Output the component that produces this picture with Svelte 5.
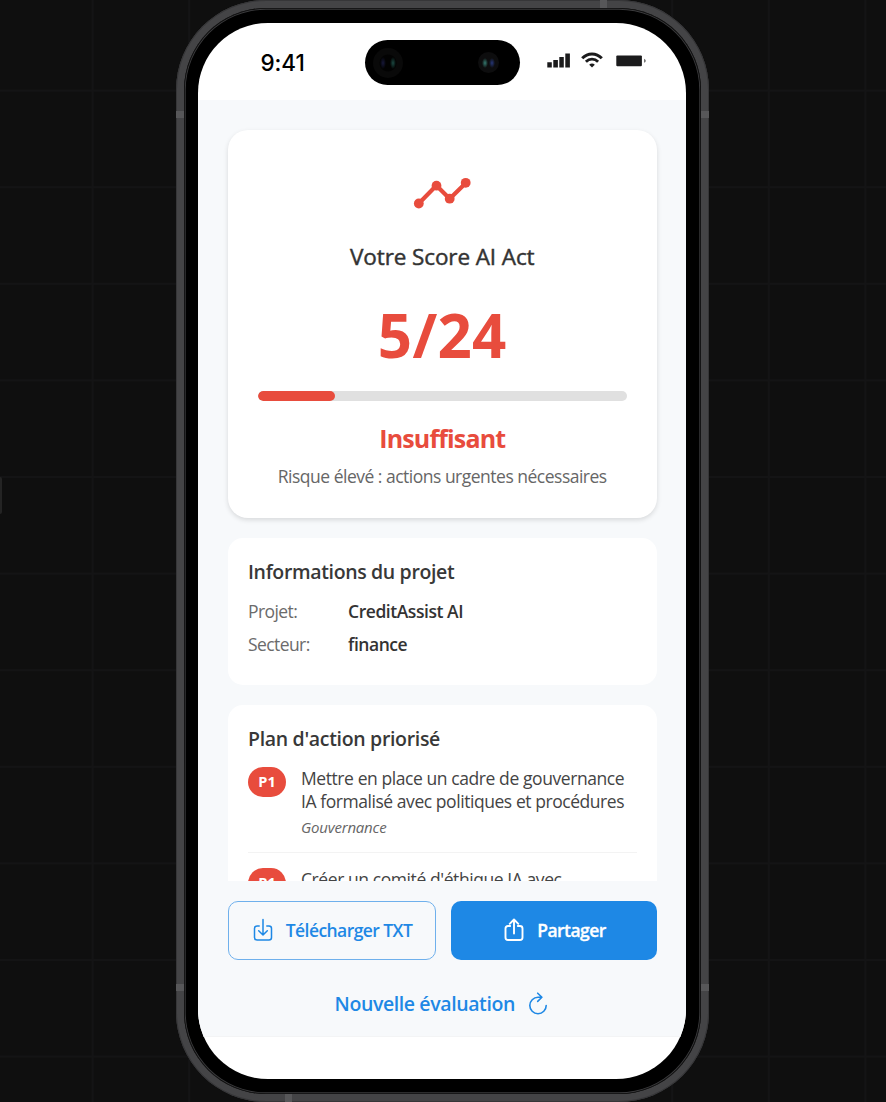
<script>
  const score = 5;
  const total = 24;
  const project = [
    { label: 'Projet:', value: 'CreditAssist AI' },
    { label: 'Secteur:', value: 'finance' }
  ];
</script>

<div class="stage">
  <div class="side-tab"></div>
  <div class="phone">
    <i class="band" style="left:0;top:111px"></i>
    <i class="band" style="right:0;top:111px"></i>
    <i class="band" style="left:0;top:984px"></i>
    <i class="band" style="right:0;top:984px"></i>
    <i class="band v" style="left:424px;top:0"></i>
    <i class="band v" style="left:109px;bottom:0"></i>
    <div class="bezel">
      <div class="screen">
        <header class="status">
          <span class="time">9:41</span>
          <div class="island"><i class="lens a"></i><i class="lens b"></i></div>
          <svg class="signal" width="24" height="16" viewBox="0 0 24 16" fill="#1b1b1c">
            <path d="M.3 9.3h4.5v5.3H.3zM6.3 7h4.6v7.6H6.3zM12.3 4h4.5v10.6h-4.5zM18.3.5h4.6v14.1h-4.6z" />
          </svg>
          <svg class="wifi" width="22" height="16" viewBox="0 0 22 16" fill="none" stroke="#1b1b1c">
            <path d="M1.2 6.200C6.800.500 15.200.500 20.800 6.200" stroke-width="3" />
            <path d="M4.900 9.700c3.500-3.400 8.700-3.400 12.200 0" stroke-width="2.900" />
            <path d="M8.200 12.700c1.500-1.700 4.100-1.700 5.600 0L11 15.400z" fill="#1b1b1c" stroke="none" />
          </svg>
          <svg class="battery" width="31" height="12" viewBox="0 0 31 12" fill="#1b1b1c">
            <rect x=".3" y=".4" width="25.6" height="10.8" rx="1" />
            <path d="M28.2 3.8c2 .9 2 3.2 0 4z" fill="#555" />
          </svg>
        </header>

        <main class="content">
          <section class="card score-card">
            <svg class="trend" width="60" height="36" viewBox="0 0 60 36" fill="#e84c3d">
              <path d="M6.8 26.5 24.4 8.5 37.7 21.7 53.8 6" fill="none" stroke="#e84c3d" stroke-width="4.2" />
              <circle cx="6.8" cy="26.5" r="4.9" /><circle cx="24.5" cy="8.7" r="4.9" />
              <circle cx="37.7" cy="21.7" r="4.9" /><circle cx="53.7" cy="5.8" r="4.9" />
            </svg>
            <h1>Votre Score AI Act</h1>
            <div class="score">{score}/{total}</div>
            <div class="track"><div class="fill" style="width:{(score / total) * 100}%"></div></div>
            <div class="verdict">Insuffisant</div>
            <p class="risk">Risque élevé : actions urgentes nécessaires</p>
          </section>

          <section class="card info">
            <h2>Informations du projet</h2>
            {#each project as row}
              <div class="row"><span class="label">{row.label}</span><span class="value">{row.value}</span></div>
            {/each}
          </section>

          <section class="card plan">
            <h2>Plan d'action priorisé</h2>
            <div class="action">
              <span class="badge">P1</span>
              <div class="body">
                <div class="line first">Mettre en place un cadre de gouvernance</div>
                <div class="line">IA formalisé avec politiques et procédures</div>
                <div class="cat">Gouvernance</div>
              </div>
            </div>
            <div class="action">
              <span class="badge">P1</span>
              <div class="body"><div class="line first">Créer un comité d'éthique IA avec</div></div>
            </div>
          </section>
        </main>

        <footer class="footer">
          <div class="buttons">
            <button class="btn outline">
              <svg width="20" height="24" viewBox="0 0 20 24" fill="none" stroke="currentColor" stroke-width="1.5" stroke-linecap="round" stroke-linejoin="round">
                <path d="M6.2 8H4Q1.5 8 1.5 10.5v9Q1.5 22 4 22h12q2.500 0 2.500-2.500v-9Q18.500 8 16 8h-2.200M10 1.500v15.300M5.700 12.800 10 17l4.300-4.200" />
              </svg>
              <span>Télécharger TXT</span>
            </button>
            <button class="btn solid">
              <svg width="20" height="24" viewBox="0 0 20 24" fill="none" stroke="currentColor" stroke-width="1.9" stroke-linecap="round" stroke-linejoin="round">
                <path d="M6.200 8H4Q1.500 8 1.500 10.500v9Q1.500 22 4 22h12q2.500 0 2.500-2.500v-9Q18.500 8 16 8h-2.200M10 15.500V1.700M5.700 5.800 10 1.500l4.300 4.300" />
              </svg>
              <span>Partager</span>
            </button>
          </div>
          <button class="again">
            <span>Nouvelle évaluation</span>
            <svg width="20" height="24" viewBox="0 0 20 24" fill="none" stroke="currentColor" stroke-width="1.600" stroke-linecap="round" stroke-linejoin="round">
              <path d="M13.700 5.300H10A8.200 8.200 0 1 0 18.200 13.500M9.700 1.200 13.900 5.300 9.700 9.400" />
            </svg>
          </button>
        </footer>
      </div>
    </div>
  </div>
</div>

<style>
  :global(body) { margin: 0; background: #0f0f0f; overflow: hidden; }
  * { box-sizing: border-box; }
  .stage {
    position: relative; width: 886px; height: 1102px; overflow: hidden;
    display: flex; padding-left: 175.500px;
    font-family: "Open Sans", "Noto Sans", sans-serif; color: #333;
    background:
      repeating-linear-gradient(90deg, transparent 0 92px, #141415 92px 94px, transparent 94px 96.6px) 0 0 / 96.600px 100%,
      repeating-linear-gradient(180deg, transparent 0 90px, #141415 90px 91.500px, transparent 91.500px 96.600px) 0 0 / 100% 96.600px,
      #0f0f0f;
  }
  .side-tab { position: absolute; left: 0; top: 477px; width: 2px; height: 37px; background: #242424; border-radius: 0 2px 2px 0; }
  .phone {
    position: relative; width: 533.500px; height: 1102px; padding: 8px; flex: none;
    border-radius: 90px; background: #444446; box-shadow: inset 0 0 0 1px #363638;
  }
  .band { position: absolute; width: 8px; height: 7px; background: #575759; }
  .band.v { width: 7px; height: 8px; }
  .bezel {
    height: 1086px; padding: 15px 15px 15px 14.500px; border-radius: 82px; background: #000;
    box-shadow: inset 0 0 0 .8px #0c0c0c, inset 0 0 0 1.700px #3b3b3d;
  }
  .screen {
    width: 488px; height: 1056px; border-radius: 70px; overflow: hidden; background: #fff;
    display: flex; flex-direction: column;
  }
  .status { height: 77px; flex: none; display: flex; padding-left: 62.500px; align-items: flex-start; }
  .time { width: 104.500px; margin-top: 25px; font: 500 22.500px/30px Inter, sans-serif; letter-spacing: -.1px; color: #000; }
  .island { position: relative; width: 154.500px; height: 45px; margin-top: 16.500px; border-radius: 23px; background: #000; }
  .lens { position: absolute; border-radius: 50%; }
  .lens.a { left: 8px; top: 8px; width: 30px; height: 30px; background: radial-gradient(ellipse 3px 6px at 10px 15px, #17183a, transparent), radial-gradient(ellipse 3px 6px at 20px 15px, #1c4a43, transparent), radial-gradient(circle, #020202 0 8px, #090909 9px); }
  .lens.b { left: 113px; top: 12px; width: 21px; height: 21px; background: radial-gradient(ellipse 3px 5px at 7px 11px, #357a70, transparent), radial-gradient(ellipse 3px 5px at 14px 11px, #263779, transparent), #0d0d0e; }
  .signal { margin: 30px 0 0 27.500px; }
  .wifi { margin: 29px 0 0 10px; }
  .battery { margin: 32px 0 0 13px; }

  .content { height: 781px; flex: none; overflow: hidden; padding: 30px 29.500px 0 30px; background: #f7f9fb; }
  .card { background: #fff; border-radius: 15px; margin-bottom: 20px; padding: 20px; }
  .score-card { height: 388px; border-radius: 20px; padding: 43px 30px 0; text-align: center; box-shadow: 0 2px 5px rgba(0,0,0,.13); }
  h1, h2, p { margin: 0; }
  .trend { display: block; margin: 4px auto 0; }
  h1 { font-size: 22.500px; line-height: 30px; font-weight: 500; margin-top: 29px; white-space: nowrap; letter-spacing: -.1px; -webkit-text-stroke: .45px #333; }
  .score { font-size: 60px; line-height: 80px; font-weight: 700; color: #e84c3d; margin-top: 23px; letter-spacing: .3px; }
  .track { height: 10px; margin-top: 16px; border-radius: 5px; background: #e0e0e0; overflow: hidden; }
  .fill { height: 10px; border-radius: 5px; background: #e84c3d; }
  .verdict { margin-top: 21px; font-size: 25px; line-height: 32px; font-weight: 700; color: #e84c3d; letter-spacing: -.85px; font-variant-ligatures: none; }
  .risk { margin-top: 7px; font-size: 17.500px; line-height: 30px; color: #666; white-space: nowrap; letter-spacing: -.5px; }
  .info { height: 147.400px; }
  h2 { font-size: 19.500px; line-height: 28px; font-weight: 600; white-space: nowrap; letter-spacing: -.35px; color: #383838; }
  .plan h2 { letter-spacing: -.32px; }
  .row { display: flex; height: 33.500px; align-items: center; font-size: 17.500px; letter-spacing: -.58px; }
  h2 + .row { margin-top: 8px; }
  .label { width: 100px; color: #6b6b6b; }
  .value { font-weight: 600; letter-spacing: -.45px; }
  .plan { height: 300px; margin: 0; }
  .action { display: flex; gap: 15px; height: 101px; padding-top: 15px; border-top: 1px solid #f3f3f3; }
  h2 + .action { padding-top: 13.500px; border: 0; height: 98.500px; }
  .badge { width: 38px; height: 30px; flex: none; border-radius: 15px; background: #e84c3d; color: #fff; font-size: 14.500px; line-height: 30px; font-weight: 700; text-align: center; }
  .line { font-size: 17.500px; line-height: 23px; white-space: nowrap; letter-spacing: -.44px; color: #444; }
  .line.first { letter-spacing: -.42px; }
  .cat { margin-top: 3px; font-size: 15px; line-height: 22px; font-style: italic; color: #666; letter-spacing: -.2px; }

  .footer { height: 156px; flex: none; background: #f7f9fb; padding: 19.500px 29.500px 0 30px; border-bottom: 1px solid #f3f4f5; }
  .buttons { display: flex; gap: 14.500px; }
  button { font-family: inherit; cursor: pointer; }
  .btn { display: flex; align-items: center; justify-content: center; height: 59px; border-radius: 10px; padding: 0 0 1px 1px; font-size: 17.500px; font-weight: 600; letter-spacing: -.57px; white-space: nowrap; }
  .btn svg { margin-right: 13px; }
  .outline { width: 208px; border: 1px solid #6fb0ec; color: #1e88e5; background: transparent; }
  .solid { width: 206px; border: 0; padding-left: 3px; color: #fff; background: #1e88e5; -webkit-text-stroke: .3px #fff; }
  .again { display: flex; align-items: center; margin: 28.500px auto 0; padding: 0 2px 0 0; border: 0; background: transparent; color: #1e88e5; font-size: 19.500px; line-height: 32px; font-weight: 600; letter-spacing: -.4px; }
  .again svg { margin-left: 13px; }
</style>
